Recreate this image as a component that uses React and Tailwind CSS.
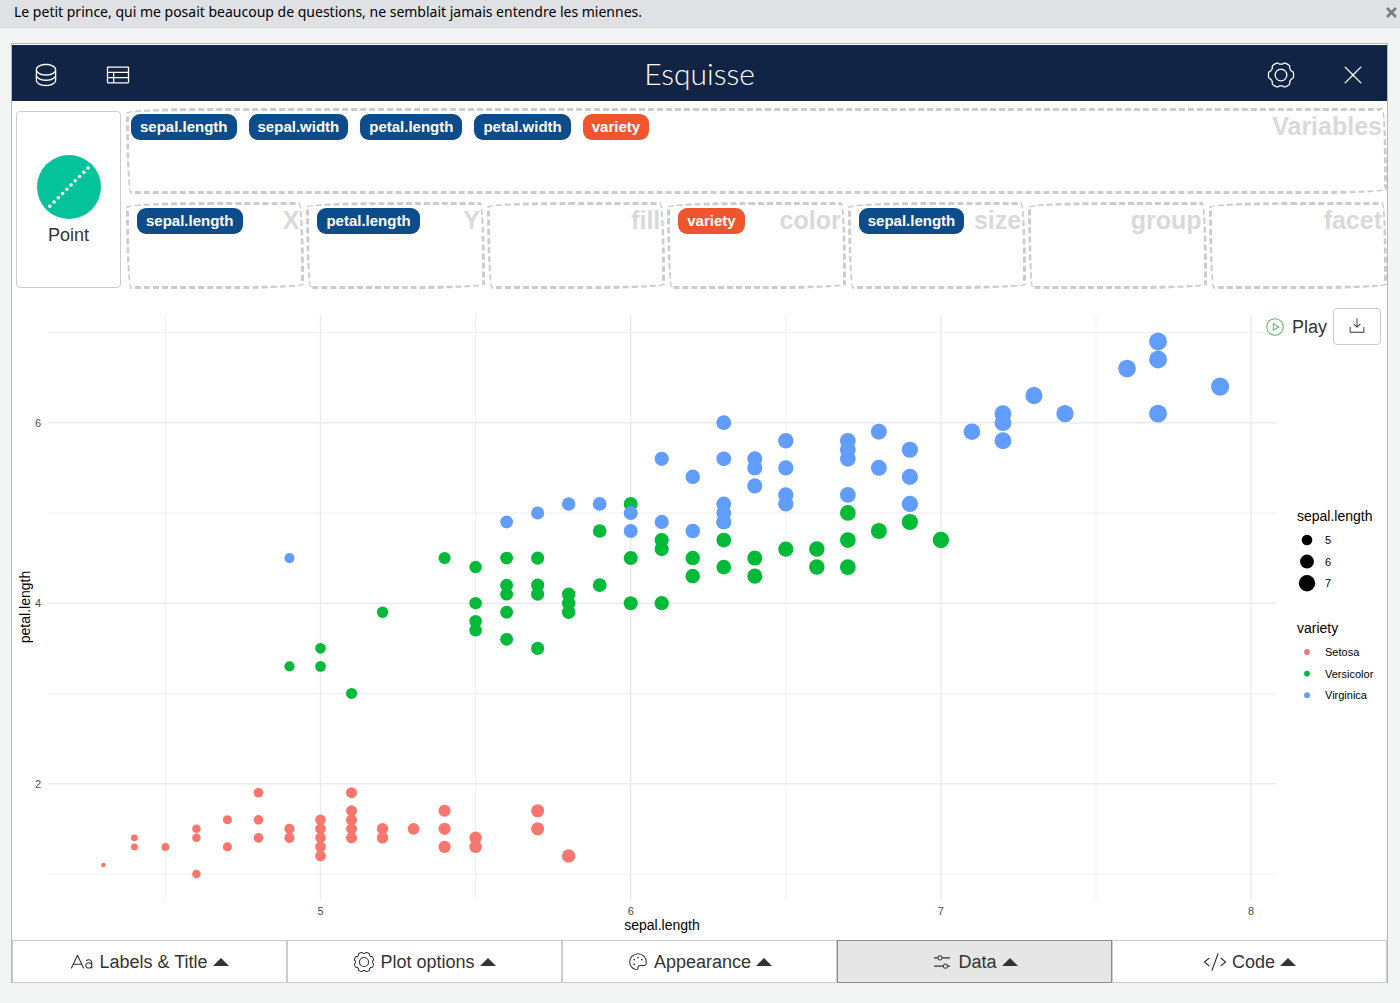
import { useState } from 'react';
import clsx from 'clsx';
import {
    PiCodeLight,
    PiDatabaseLight,
    PiDownloadSimpleLight,
    PiPaletteLight,
    PiPlayCircleLight,
    PiSlidersHorizontalLight,
    PiTableLight,
    PiTextAaLight,
    PiXLight,
} from 'react-icons/pi';

const VARIABLES = [
    { name: 'sepal.length', type: 'continuous' },
    { name: 'sepal.width', type: 'continuous' },
    { name: 'petal.length', type: 'continuous' },
    { name: 'petal.width', type: 'continuous' },
    { name: 'variety', type: 'discrete' },
];

const AESTHETICS = [
    { label: 'X', variable: VARIABLES[0] },
    { label: 'Y', variable: VARIABLES[2] },
    { label: 'fill' },
    { label: 'color', variable: VARIABLES[4] },
    { label: 'size', variable: VARIABLES[0] },
    { label: 'group' },
    { label: 'facet' },
];

// sepal.length -> petal.length values
const SERIES = [
    {
        name: 'Setosa',
        color: '#f8766d',
        points: [
            [4.3, [1.1]],
            [4.4, [1.4, 1.3]],
            [4.5, [1.3]],
            [4.6, [1.5, 1.4, 1.0]],
            [4.7, [1.6, 1.3]],
            [4.8, [1.9, 1.6, 1.4]],
            [4.9, [1.5, 1.4]],
            [5.0, [1.6, 1.5, 1.4, 1.3, 1.2]],
            [5.1, [1.9, 1.7, 1.6, 1.5, 1.4]],
            [5.2, [1.5, 1.4]],
            [5.3, [1.5]],
            [5.4, [1.7, 1.5, 1.3]],
            [5.5, [1.4, 1.3]],
            [5.7, [1.7, 1.5]],
            [5.8, [1.2]],
        ],
    },
    {
        name: 'Versicolor',
        color: '#00ba38',
        points: [
            [4.9, [3.3]],
            [5.0, [3.5, 3.3]],
            [5.1, [3.0]],
            [5.2, [3.9]],
            [5.4, [4.5]],
            [5.5, [4.4, 4.0, 3.8, 3.7]],
            [5.6, [4.5, 4.2, 4.1, 3.9, 3.6]],
            [5.7, [4.5, 4.2, 4.1, 3.5]],
            [5.8, [4.1, 4.0, 3.9]],
            [5.9, [4.8, 4.2]],
            [6.0, [5.1, 4.5, 4.0]],
            [6.1, [4.7, 4.6, 4.0]],
            [6.2, [4.5, 4.3]],
            [6.3, [4.9, 4.7, 4.4]],
            [6.4, [4.5, 4.3]],
            [6.5, [4.6]],
            [6.6, [4.6, 4.4]],
            [6.7, [5.0, 4.7, 4.4]],
            [6.8, [4.8]],
            [6.9, [4.9]],
            [7.0, [4.7]],
        ],
    },
    {
        name: 'Virginica',
        color: '#619cff',
        points: [
            [4.9, [4.5]],
            [5.6, [4.9]],
            [5.7, [5.0]],
            [5.8, [5.1]],
            [5.9, [5.1]],
            [6.0, [5.0, 4.8]],
            [6.1, [5.6, 4.9]],
            [6.2, [5.4, 4.8]],
            [6.3, [6.0, 5.6, 5.1, 5.0, 4.9]],
            [6.4, [5.6, 5.5, 5.3]],
            [6.5, [5.8, 5.5, 5.2, 5.1]],
            [6.7, [5.8, 5.7, 5.6, 5.2]],
            [6.8, [5.9, 5.5]],
            [6.9, [5.7, 5.4, 5.1]],
            [7.1, [5.9]],
            [7.2, [6.1, 6.0, 5.8]],
            [7.3, [6.3]],
            [7.4, [6.1]],
            [7.6, [6.6]],
            [7.7, [6.9, 6.7, 6.1]],
            [7.9, [6.4]],
        ],
    },
];

const xPos = (v) => 308.5 + (v - 5) * 310.2;
const yPos = (v) => 122.7 + (6 - v) * 90.25;

// point area grows with the value, between sizes 1 and 6
const radius = (v) => 0.93 + 1.365 * (1 + 5 * Math.sqrt(Math.max(0, v - 4.3) / 3.6));

// Closed outline of a cog with wide rounded teeth, centred on 12,12
function cogPath(teeth, phase) {
    const steps = 144;
    const points = [];
    for (let i = 0; i < steps; i++) {
        const a = (i / steps) * Math.PI * 2;
        const r = 10 + 0.8 * Math.tanh(2.4 * (Math.cos(teeth * (a - phase)) + 0.35));
        points.push(`${(12 + r * Math.cos(a)).toFixed(2)} ${(12 + r * Math.sin(a)).toFixed(2)}`);
    }
    return `M${points.join('L')}Z`;
}

function Cog({ teeth, phase = 0, inner, className }) {
    return (
        <svg
            viewBox="0 0 24 24"
            fill="none"
            stroke="currentColor"
            strokeWidth="1.1"
            strokeLinejoin="round"
            className={className}
        >
            <path d={cogPath(teeth, phase)} />
            <circle cx="12" cy="12" r={inner} />
        </svg>
    );
}

function Caret() {
    return (
        <svg viewBox="0 0 16 8" fill="currentColor" className="w-4 h-2">
            <path d="M8 0L16 8H0Z" />
        </svg>
    );
}

function Chip({ variable }) {
    return (
        <span
            className={clsx(
                'h-[26px] px-[9px] rounded-[9px] text-white text-[15px] leading-[26px] font-bold cursor-move',
                variable.type === 'discrete' ? 'bg-[#ef562d]' : 'bg-[#0c4c8a]'
            )}
        >
            {variable.name}
        </span>
    );
}

function DropZone({ label, className, children }) {
    return (
        <div
            className={clsx(
                'flex justify-between border-[3px] border-dashed border-[#cccccc] rounded-[255px_15px_225px_15px/15px_225px_15px_255px] pt-[3px] pr-[2px]',
                className
            )}
        >
            <div className="flex gap-3 items-start">{children}</div>
            <span className="text-[25px] leading-6 font-bold text-[#d9d9d9]">{label}</span>
        </div>
    );
}

function ScatterPlot() {
    return (
        <svg viewBox="0 0 1375 640" className="block w-full h-auto" role="img" aria-label="petal.length by sepal.length">
            <g stroke="#ebebeb">
                {[4.5, 5, 5.5, 6, 6.5, 7, 7.5, 8].map((v) => (
                    <line key={v} x1={xPos(v)} x2={xPos(v)} y1="15" y2="600" strokeWidth={v % 1 ? 0.8 : 1.5} />
                ))}
                {[1, 2, 3, 4, 5, 6, 7].map((v) => (
                    <line key={v} x1="36" x2="1264" y1={yPos(v)} y2={yPos(v)} strokeWidth={v % 2 ? 0.8 : 1.5} />
                ))}
            </g>

            {SERIES.map((serie) => (
                <g key={serie.name} fill={serie.color}>
                    {serie.points.map(([x, ys]) =>
                        ys.map((y) => <circle key={`${x}-${y}`} cx={xPos(x)} cy={yPos(y)} r={radius(x)} />)
                    )}
                </g>
            ))}

            {/* Axes */}
            <g fontSize="11" fill="#4d4d4d">
                {[5, 6, 7, 8].map((v) => (
                    <text key={v} x={xPos(v)} y="615" textAnchor="middle">{v}</text>
                ))}
                {[2, 4, 6].map((v) => (
                    <text key={v} x="29" y={yPos(v) + 4} textAnchor="end">{v}</text>
                ))}
            </g>
            <g fontSize="14" fill="#000">
                <text x="650" y="630" textAnchor="middle">sepal.length</text>
                <text transform="translate(18 307) rotate(-90)" textAnchor="middle">petal.length</text>
            </g>

            {/* Legends */}
            <g fontSize="14" fill="#000">
                <text x="1285" y="221">sepal.length</text>
                <text x="1285" y="333">variety</text>
            </g>
            <g fontSize="11" fill="#000">
                {[5, 6, 7].map((v, i) => (
                    <g key={v}>
                        <circle cx="1295" cy={240 + i * 21.6} r={radius(v)} />
                        <text x="1313" y={244 + i * 21.6}>{v}</text>
                    </g>
                ))}
                {SERIES.map((serie, i) => (
                    <g key={serie.name}>
                        <circle cx="1295" cy={352 + i * 21.6} r="2.9" fill={serie.color} />
                        <text x="1313" y={356 + i * 21.6}>{serie.name}</text>
                    </g>
                ))}
            </g>
        </svg>
    );
}

const MENUS = [
    { label: 'Labels & Title', icon: <PiTextAaLight className="w-6 h-6" /> },
    { label: 'Plot options', icon: <Cog teeth={8} phase={Math.PI / 8} inner={5} className="w-[22px] h-[22px]" /> },
    { label: 'Appearance', icon: <PiPaletteLight className="w-[22px] h-[22px]" /> },
    { label: 'Data', icon: <PiSlidersHorizontalLight className="w-[22px] h-[22px]" /> },
    { label: 'Code', icon: <PiCodeLight className="w-6 h-6" /> },
];

export default function App() {
    const [active, setActive] = useState('Data');

    return (
        <div className="min-h-screen bg-[#f3f5f4] text-[#333333] font-['Liberation_Sans',Arial,sans-serif]">
            <div className="flex items-center justify-between h-7 pl-[14px] pr-[3px] pb-[3px] bg-[#e0e1e5] border-b border-[#d6d7da]">
                <p className="text-sm leading-6 text-black font-['Noto_Sans','Lucida_Grande',sans-serif]">
                    Le petit prince, qui me posait beaucoup de questions, ne semblait jamais entendre les miennes.
                </p>
                <button type="button" aria-label="Dismiss" className="text-[#7b7b7d]">
                    <svg viewBox="0 0 11 11" stroke="currentColor" strokeWidth="2.6" className="w-[11px] h-[11px]">
                        <path d="M1 1L10 10M10 1L1 10" />
                    </svg>
                </button>
            </div>

            <main className="mt-[15px] ml-[11px] mr-3 border-t border-x border-[#b5b8b8] bg-white pt-px">
                <header className="grid grid-cols-3 items-center h-14 px-5 bg-[#112446] text-white">
                    <div className="flex gap-11 pt-1">
                        <button type="button" aria-label="Import data"><PiDatabaseLight className="w-7 h-7" /></button>
                        <button type="button" aria-label="Show data"><PiTableLight className="w-7 h-7" /></button>
                    </div>
                    <h1 className="text-center text-[30px] leading-10 font-light font-['Lato',cursive]">Esquisse</h1>
                    <div className="flex gap-11 justify-end pt-1">
                        <button type="button" aria-label="Settings"><Cog teeth={6} inner={5} className="w-7 h-7" /></button>
                        <button type="button" aria-label="Close"><PiXLight className="w-7 h-7" /></button>
                    </div>
                </header>

                <div className="flex gap-[5px] pt-[7px] pl-1">
                    <button
                        type="button"
                        className="flex flex-col items-center justify-center gap-1 w-[105px] mt-[3px] mb-px pt-[2px] border border-[#cccccc] rounded text-lg leading-6"
                    >
                        <svg viewBox="0 0 64 64" className="w-16 h-16">
                            <circle cx="32" cy="32" r="32" fill="#04c39b" />
                            <g fill="#ffffff">
                                {[0, 1, 2, 3, 4, 5, 6, 7, 8, 9].map((i) => (
                                    <circle key={i} cx={12.8 + i * 4.25} cy={51.2 - i * 4.25} r="1.8" />
                                ))}
                            </g>
                        </svg>
                        Point
                    </button>
                    <div className="flex-1 flex flex-col gap-2">
                        <DropZone label="Variables" className="h-[86px] pl-[2px]">
                            {VARIABLES.map((v) => <Chip key={v.name} variable={v} />)}
                        </DropZone>
                        <div className="grid grid-cols-7 gap-[2px]">
                            {AESTHETICS.map(({ label, variable }) => (
                                <DropZone key={label} label={label} className="h-[87px] pl-2">
                                    {variable && <Chip variable={variable} />}
                                </DropZone>
                            ))}
                        </div>
                    </div>
                </div>

                <div className="relative mt-[11px]">
                    <ScatterPlot />
                    <div className="absolute top-2 right-[6px] flex items-center">
                        <button type="button" className="flex items-center gap-[6px] pr-[6px] bg-white text-lg leading-6">
                            <PiPlayCircleLight className="w-[22px] h-[22px] text-[#5cb85c]" />
                            Play
                        </button>
                        <button
                            type="button"
                            aria-label="Download"
                            className="flex items-center justify-center w-12 h-[37px] pb-[2px] bg-white border border-[#cccccc] rounded"
                        >
                            <PiDownloadSimpleLight className="w-5 h-5" />
                        </button>
                    </div>
                </div>

                <nav className="grid grid-cols-5">
                    {MENUS.map(({ label, icon }) => (
                        <button
                            key={label}
                            type="button"
                            onClick={() => setActive(label)}
                            className={clsx(
                                'flex items-center justify-center gap-[5px] h-[43px] border text-lg leading-6',
                                active === label ? 'bg-[#e6e6e6] border-[#8c8c8c]' : 'bg-white border-[#cccccc]'
                            )}
                        >
                            {icon}
                            {label}
                            <Caret />
                        </button>
                    ))}
                </nav>
            </main>
        </div>
    );
}
